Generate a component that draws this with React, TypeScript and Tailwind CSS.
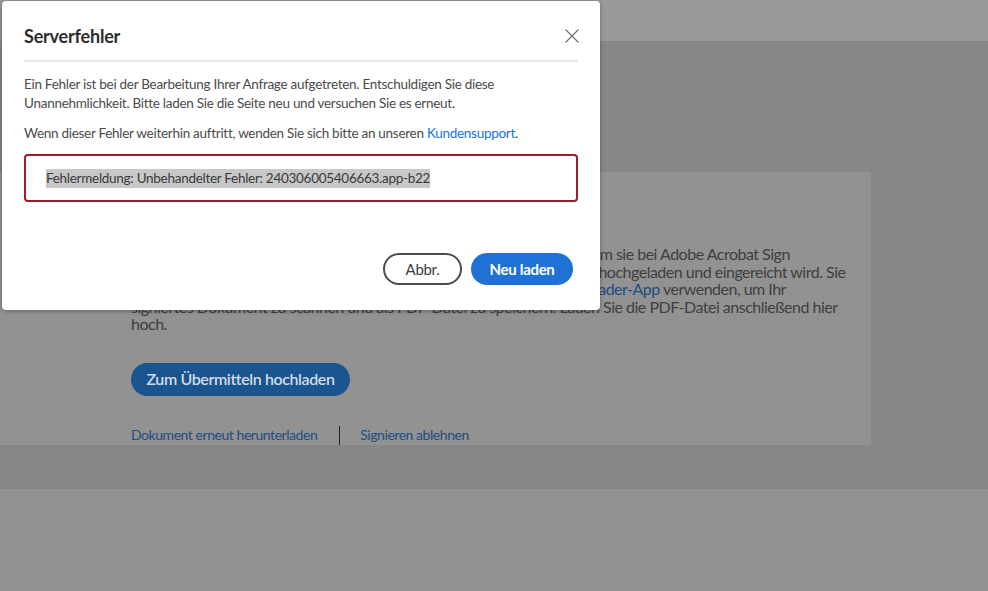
import { X } from "lucide-react";

const font = { fontFamily: "Lato, 'Noto Sans', sans-serif" };

function Background() {
  return (
    <div className="flex flex-col h-[591px]">
      <div className="h-[41px] bg-[#999999]" />
      <div className="h-[448px] bg-[#878787] pt-[131px]">
        <div className="w-[871px] h-[273px] bg-[#929292] pl-[131px] pt-[24px] text-[#3e3e3e]">
          <h2 className="text-[22px] leading-[28px] font-bold text-[#333]">Signiertes Dokument hochladen</h2>
          <p className="mt-[21px] text-[16px] leading-[17.5px] tracking-[-0.5px] whitespace-nowrap">
            Laden Sie Ihr handschriftlich signiertes Dokument als PDF-Datei hoch, um sie bei Adobe Acrobat Sign
            <br />
            zu übermitteln. Stellen Sie sicher, dass das gesamte signierte Dokument hochgeladen und eingereicht wird. Sie
            <br />
            können auch gerne die Scanfunktion der kostenlosen Adobe Acrobat <span className="text-[#1d4a80]">Reader-App</span> verwenden, um Ihr
            <br />
            signiertes Dokument zu scannen und als PDF-Datei zu speichern. Laden Sie die PDF-Datei anschließend hier
            <br />
            hoch.
          </p>
          <button className="mt-[30px] h-[33px] w-[219px] rounded-full bg-[#1a5590] text-[16px] tracking-[-0.4px] font-semibold text-[#d3dbe5]">
            Zum Übermitteln hochladen
          </button>
          <div className="mt-[30px] flex items-center text-[14px] leading-[18px] tracking-[-0.45px] text-[#234c80]">
            <span>Dokument erneut herunterladen</span>
            <span className="ml-[22px] mr-[20px] h-[19px] w-px bg-[#222]" />
            <span>Signieren ablehnen</span>
          </div>
        </div>
      </div>
      <div className="flex-1 bg-[#929292]" />
    </div>
  );
}

function ErrorDialog() {
  return (
    <div className="absolute left-[2px] top-[1px] w-[598px] h-[309px] bg-white rounded-[4px] shadow-[0_1px_4px_rgba(0,0,0,0.35)] flex flex-col px-[22px]">
      <div className="h-[61px] pt-[22px] flex items-start justify-between border-b-2 border-[#e6e6e6]">
        <h1 className="text-[18px] leading-[26px] font-bold text-[#2c2c2c] tracking-[-0.2px]">Serverfehler</h1>
        <X className="w-[24px] h-[24px] mt-[1px] text-[#707070] mr-[-6px]" strokeWidth={1.2} />
      </div>
      <p className="mt-[13px] text-[13.5px] leading-[19px] tracking-[-0.28px] text-[#4b4b4b]">
        Ein Fehler ist bei der Bearbeitung Ihrer Anfrage aufgetreten. Entschuldigen Sie diese
        <br />
        Unannehmlichkeit. Bitte laden Sie die Seite neu und versuchen Sie es erneut.
      </p>
      <p className="mt-[11px] text-[13.5px] leading-[19px] tracking-[-0.28px] text-[#4b4b4b]">
        Wenn dieser Fehler weiterhin auftritt, wenden Sie sich bitte an unseren{" "}
        <span className="text-[#1473e6]">Kundensupport</span>.
      </p>
      <div className="mt-[11px] h-[48px] border-2 border-[#9b1c2c] rounded-[4px] flex items-center pl-[20px]">
        <span className="bg-[#c8c8c8] text-[13.5px] leading-[19px] tracking-[-0.28px] text-[#3a3a3a]">
          Fehlermeldung: Unbehandelter Fehler: 240306005406663.app-b22
        </span>
      </div>
      <div className="mt-auto mb-[25px] mr-[5px] flex justify-end gap-[9px]">
        <button className="h-[32px] w-[79px] rounded-full border-2 border-[#4b4b4b] text-[15px] tracking-[-0.3px] text-[#3e3e3e]">
          Abbr.
        </button>
        <button className="h-[32px] w-[102px] rounded-full bg-[#1f72d3] text-[15px] tracking-[-0.3px] font-bold text-white">
          Neu laden
        </button>
      </div>
    </div>
  );
}

export default function App() {
  return (
    <div className="relative w-[988px] h-[591px] overflow-hidden" style={font}>
      <Background />
      <ErrorDialog />
    </div>
  );
}
